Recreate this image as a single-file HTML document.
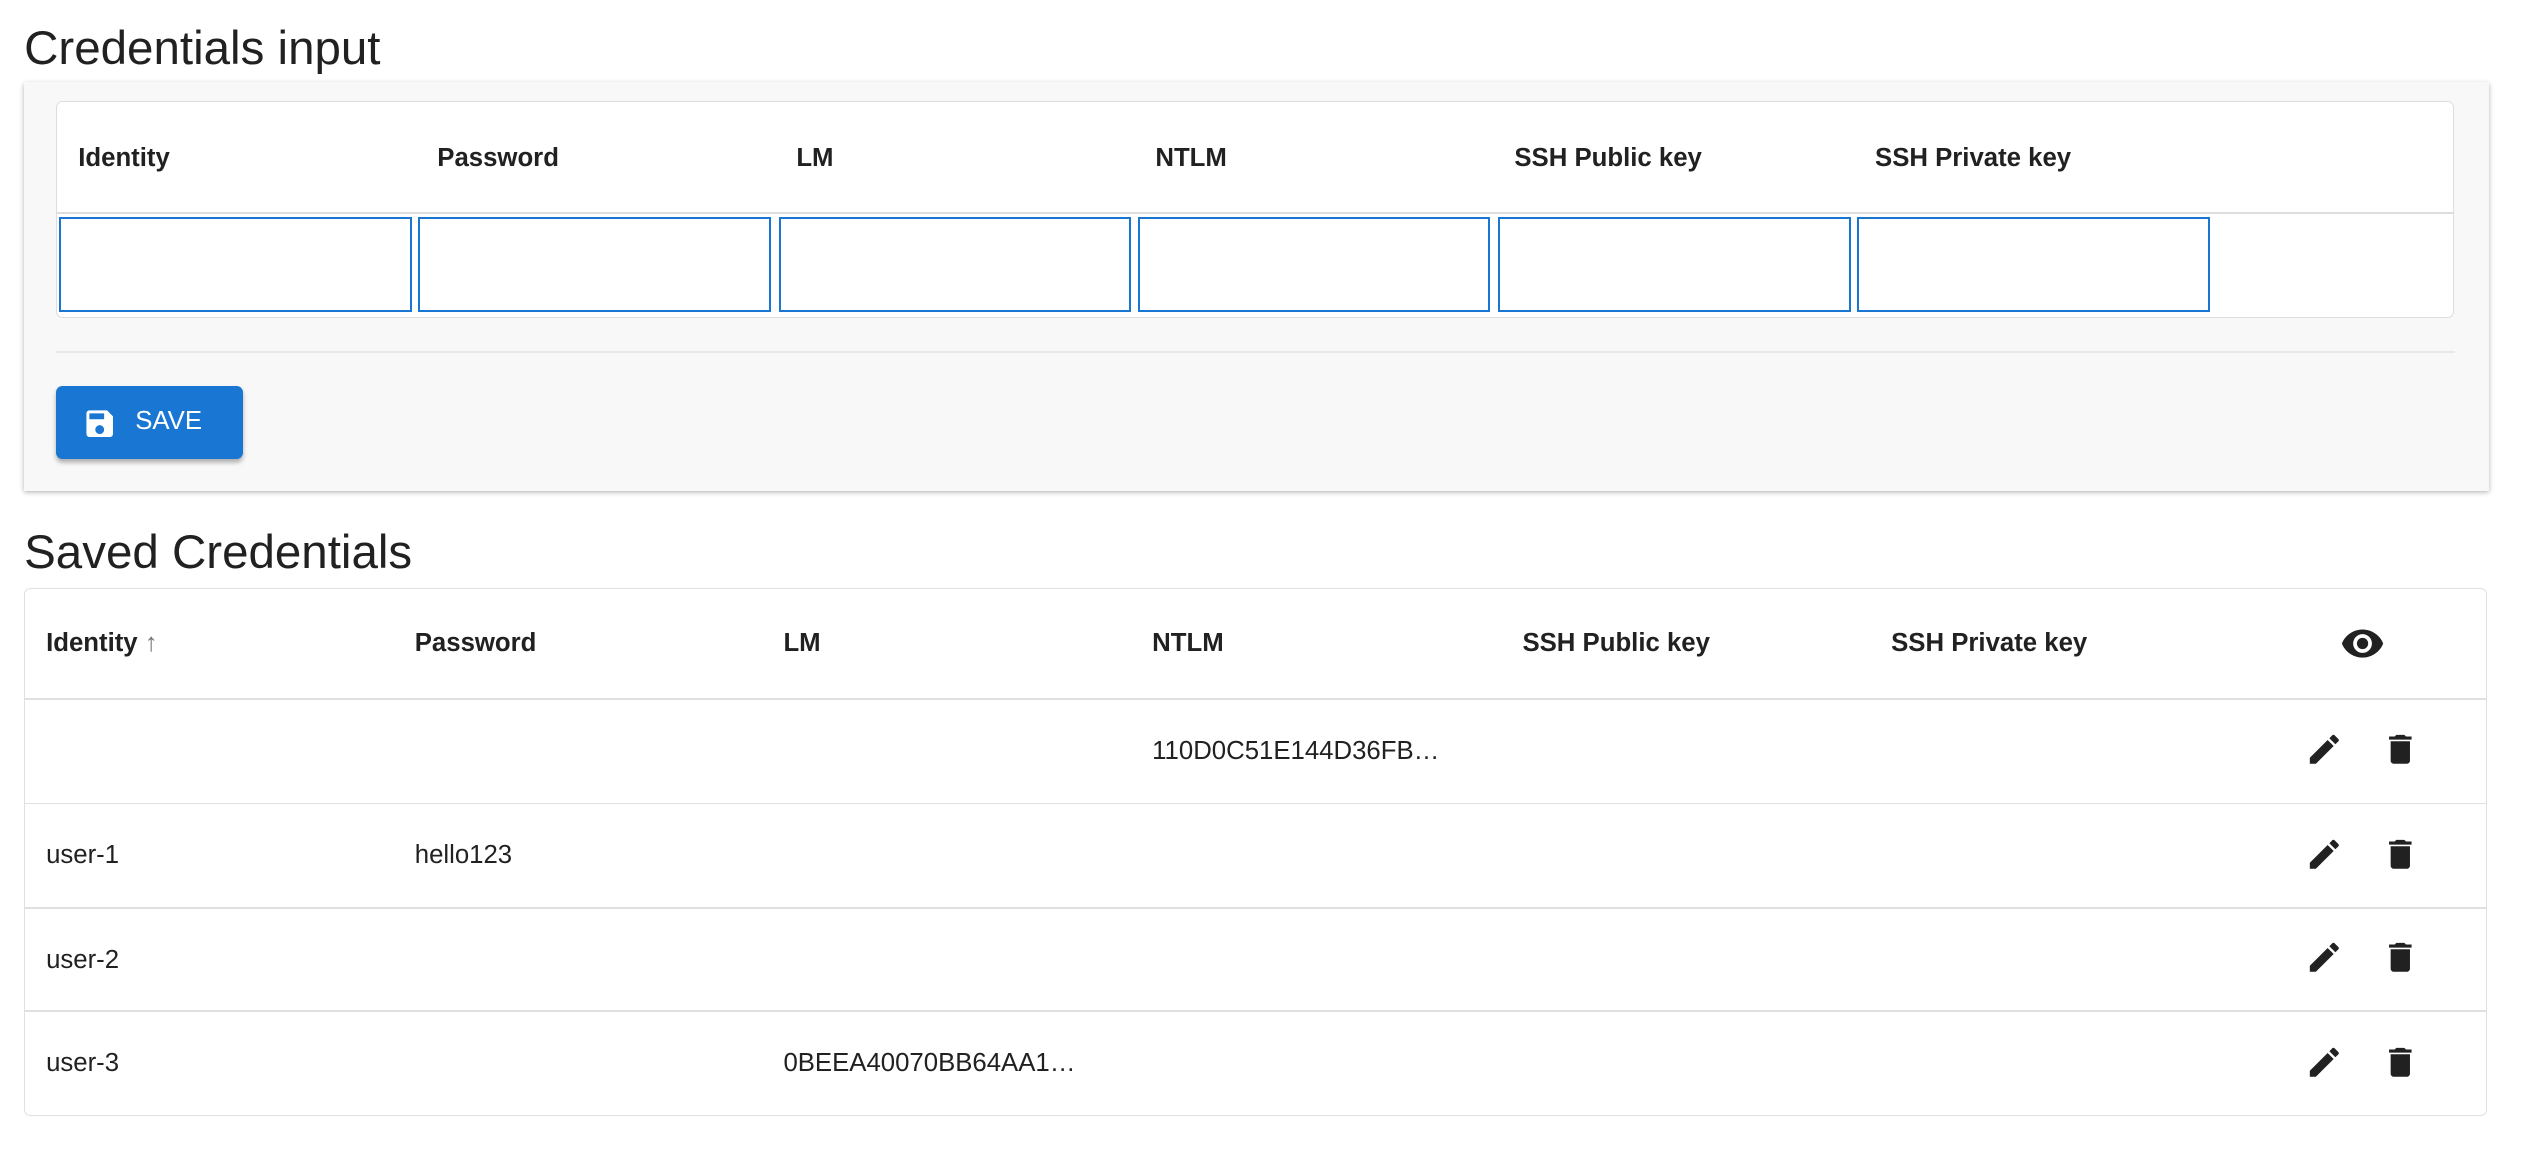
<!DOCTYPE html>
<html><head><meta charset="utf-8"><style>
html,body{margin:0;padding:0;background:#fff;width:2524px;height:1150px;overflow:hidden}
#w{zoom:1.61;width:1568px;height:715px;position:relative;font-family:"Liberation Sans",Arial,sans-serif;color:#212121}
.h{position:absolute;left:15px;font-size:29.5px;font-weight:400;color:#212121;white-space:nowrap}
.card1{position:absolute;left:15px;top:51px;width:1531px;height:254px;background:#f8f8f8;box-shadow:0 1px 3px rgba(0,0,0,.3)}
.inner{position:absolute;left:20px;top:12px;width:1488px;height:133px;background:#fff;border:1px solid #ddd;border-radius:4px}
.th{position:absolute;font-size:16px;font-weight:700;white-space:nowrap}
.inp{position:absolute;top:71px;width:219px;height:59px;border:1.3px solid #1976d2;box-sizing:border-box}
.div{position:absolute;left:20px;top:167px;width:1490px;height:1px;background:#e8e8e8}
.btn{position:absolute;left:20px;top:189px;width:116px;height:45px;background:#1976d2;border-radius:4px;box-shadow:0 2px 3px rgba(0,0,0,.3);color:#fff;font-size:16px}
.card2{position:absolute;left:15px;top:365px;width:1530px;height:328px;border:1px solid #e0e0e0;border-radius:4px;box-sizing:border-box;background:#fff}
.line{position:absolute;left:0;width:100%;height:1px;background:#e0e0e0}
.td{position:absolute;font-size:16px;white-space:nowrap}
</style></head><body><div id="w">
<div class="h" style="top:13px">Credentials input</div>
<div class="card1">
 <div class="inner">
  <div class="th" style="left:13px;top:26px">Identity</div>
  <div class="th" style="left:236px;top:26px">Password</div>
  <div class="th" style="left:459px;top:26px">LM</div>
  <div class="th" style="left:682px;top:26px">NTLM</div>
  <div class="th" style="left:905px;top:26px">SSH Public key</div>
  <div class="th" style="left:1129px;top:26px">SSH Private key</div>
  <div style="position:absolute;left:0;top:68px;width:100%;height:1px;background:#ddd"></div>
  <div class="inp" style="left:1px"></div>
  <div class="inp" style="left:224px"></div>
  <div class="inp" style="left:448px"></div>
  <div class="inp" style="left:671px"></div>
  <div class="inp" style="left:895px"></div>
  <div class="inp" style="left:1118px"></div>
 </div>
 <div class="div"></div>
 <div class="btn">
  <svg style="position:absolute;left:16px;top:12px" width="22" height="22" viewBox="0 0 24 24"><path fill="#fff" d="M17 3H5a2 2 0 0 0-2 2v14a2 2 0 0 0 2 2h14a2 2 0 0 0 2-2V7l-4-4zm-5 16a3 3 0 1 1 0-6 3 3 0 0 1 0 6zm3-10H5V5h10v4z"/></svg>
  <span style="position:absolute;left:49px;top:13px">SAVE</span>
 </div>
</div>
<div class="h" style="top:326px">Saved Credentials</div>
<div class="card2">
 <div class="th" style="left:13px;top:25px">Identity <span style="color:#777;font-weight:400">&#8593;</span></div>
 <div class="th" style="left:242px;top:25px">Password</div>
 <div class="th" style="left:471px;top:25px">LM</div>
 <div class="th" style="left:700px;top:25px">NTLM</div>
 <div class="th" style="left:930px;top:25px">SSH Public key</div>
 <div class="th" style="left:1159px;top:25px">SSH Private key</div>
 <svg style="position:absolute;left:1438px;top:20px" width="28" height="28" viewBox="0 0 24 24"><path fill="#212121" d="M12 4.5C7 4.5 2.7 7.6 1 12c1.7 4.4 6 7.5 11 7.5s9.3-3.1 11-7.5c-1.7-4.4-6-7.5-11-7.5zM12 17a5 5 0 1 1 0-10 5 5 0 0 1 0 10zm0-8a3 3 0 1 0 0 6 3 3 0 0 0 0-6z"/></svg>
 <div class="line" style="top:68px"></div>
 <div class="line" style="top:133px"></div>
 <div class="line" style="top:198px"></div>
 <div class="line" style="top:262px"></div>
 <div class="td" style="left:700px;top:92px">110D0C51E144D36FB…</div>
 <div class="td" style="left:13px;top:157px">user-1</div>
 <div class="td" style="left:242px;top:157px">hello123</div>
 <div class="td" style="left:13px;top:222px">user-2</div>
 <div class="td" style="left:13px;top:286px">user-3</div>
 <div class="td" style="left:471px;top:286px">0BEEA40070BB64AA1…</div>
 <svg style="position:absolute;left:1416px;top:88px" width="24" height="24" viewBox="0 0 24 24"><path fill="#212121" d="M3 17.25V21h3.75L17.81 9.94l-3.75-3.75L3 17.25zM20.71 7.04a1 1 0 0 0 0-1.41l-2.34-2.340a1 1 0 0 0-1.41 0l-1.830 1.83 3.75 3.75 1.830-1.83z"/></svg>
 <svg style="position:absolute;left:1463px;top:88px" width="24" height="24" viewBox="0 0 24 24"><path fill="#212121" d="M6 19c0 1.1.9 2 2 2h8c1.1 0 2-.9 2-2V7H6v12zM19 4h-3.5l-1-1h-5l-1 1H5v2h14V4z"/></svg>
 <svg style="position:absolute;left:1416px;top:153px" width="24" height="24" viewBox="0 0 24 24"><path fill="#212121" d="M3 17.25V21h3.75L17.81 9.94l-3.75-3.75L3 17.25zM20.71 7.04a1 1 0 0 0 0-1.41l-2.34-2.34a1 1 0 0 0-1.41 0l-1.83 1.83 3.75 3.75 1.83-1.83z"/></svg>
 <svg style="position:absolute;left:1463px;top:153px" width="24" height="24" viewBox="0 0 24 24"><path fill="#212121" d="M6 19c0 1.1.9 2 2 2h8c1.1 0 2-.9 2-2V7H6v12zM19 4h-3.5l-1-1h-5l-1 1H5v2h14V4z"/></svg>
 <svg style="position:absolute;left:1416px;top:217px" width="24" height="24" viewBox="0 0 24 24"><path fill="#212121" d="M3 17.25V21h3.75L17.81 9.94l-3.75-3.75L3 17.25zM20.71 7.04a1 1 0 0 0 0-1.41l-2.34-2.34a1 1 0 0 0-1.41 0l-1.83 1.83 3.75 3.75 1.83-1.83z"/></svg>
 <svg style="position:absolute;left:1463px;top:217px" width="24" height="24" viewBox="0 0 24 24"><path fill="#212121" d="M6 19c0 1.1.9 2 2 2h8c1.1 0 2-.9 2-2V7H6v12zM19 4h-3.5l-1-1h-5l-1 1H5v2h14V4z"/></svg>
 <svg style="position:absolute;left:1416px;top:282px" width="24" height="24" viewBox="0 0 24 24"><path fill="#212121" d="M3 17.25V21h3.75L17.81 9.94l-3.75-3.75L3 17.25zM20.71 7.04a1 1 0 0 0 0-1.41l-2.34-2.34a1 1 0 0 0-1.41 0l-1.83 1.83 3.75 3.75 1.83-1.83z"/></svg>
 <svg style="position:absolute;left:1463px;top:282px" width="24" height="24" viewBox="0 0 24 24"><path fill="#212121" d="M6 19c0 1.1.9 2 2 2h8c1.1 0 2-.9 2-2V7H6v12zM19 4h-3.5l-1-1h-5l-1 1H5v2h14V4z"/></svg>
</div>
</div></body></html>
